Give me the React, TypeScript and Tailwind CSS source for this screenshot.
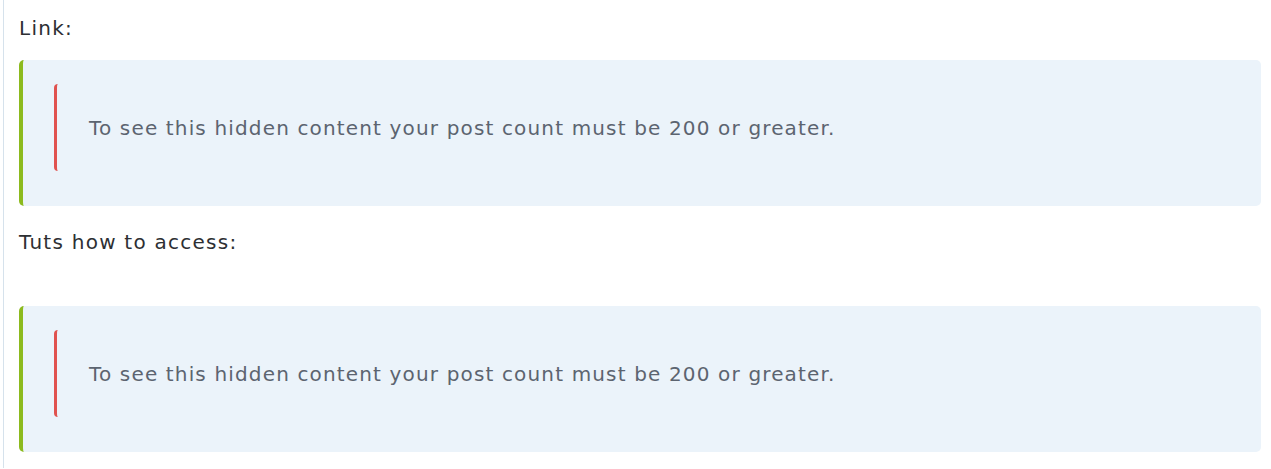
const NOTICE = 'To see this hidden content your post count must be 200 or greater.';

function HiddenBox() {
  return (
    <div className="rounded-[5px] border-l-4 border-[#8cba1e] bg-[#ebf3fa] pl-[31px] pr-8 pt-6 pb-[35px]">
      <div className="flex h-[87px] items-center rounded-sm border-l-[3px] border-[#e0524f] pl-[32px]">
        <span className="text-[20px] tracking-[1.15px] text-[#5c6470]">{NOTICE}</span>
      </div>
    </div>
  );
}

export default function App() {
  return (
    <div className="min-h-screen bg-white" style={{ fontFamily: '"DejaVu Sans", "Open Sans", sans-serif' }}>
      <div className="ml-[3px] border-l border-[#d6e2ec] pl-[15px] pr-[10px] pt-[13px] pb-4">
        <div className="h-[30px] text-[20px] leading-[30px] tracking-[1.25px] text-[#2d2f33]">Link:</div>
        <div className="mt-[17px]">
          <HiddenBox />
        </div>
        <div className="mt-[21px] h-[30px] text-[20px] leading-[30px] tracking-[1.25px] text-[#2d2f33]">Tuts how to access:</div>
        <div className="h-[30px]" />
        <div className="mt-[19px]">
          <HiddenBox />
        </div>
      </div>
    </div>
  );
}
